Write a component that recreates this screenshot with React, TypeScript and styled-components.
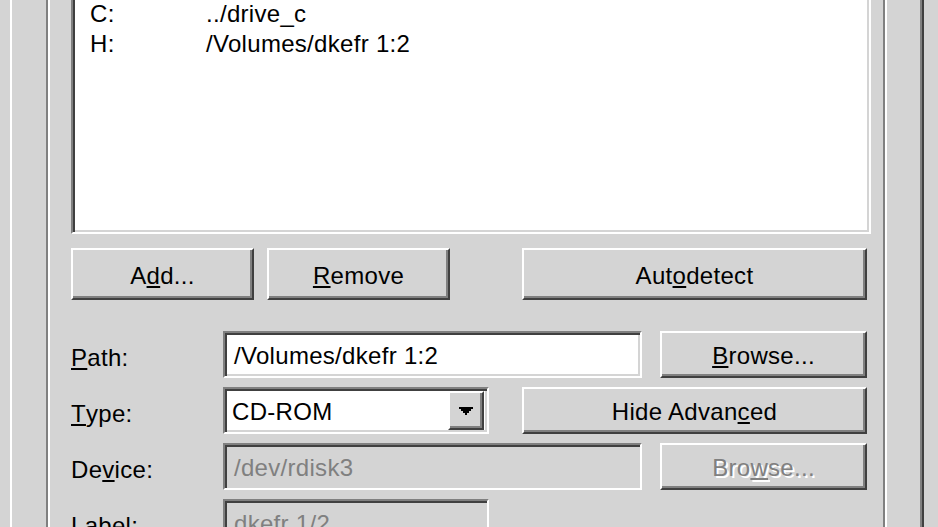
import React from "react";
import styled, { createGlobalStyle, css } from "styled-components";

const GlobalStyle = createGlobalStyle`
  html, body {
    margin: 0;
    padding: 0;
    background: #d4d4d4;
    overflow: hidden;
  }
  body {
    font-family: "Liberation Sans", Arial, sans-serif;
    font-size: 24px;
    letter-spacing: 0.3px;
    color: #000;
  }
  * { box-sizing: border-box; }
`;

const Frame = styled.div`
  width: 938px;
  height: 527px;
  overflow: hidden;
  padding-left: 10px;
  background: #d4d4d4;
`;

const TabPage = styled.div`
  width: 914px;
  margin-top: -80px;
  border-left: 2px solid #fff;
  border-top: 2px solid #fff;
  border-right: 2px solid #404040;
  box-shadow: inset -2px 0 0 #808080;
  padding: 18px 0 120px 34px;
`;

const GroupBox = styled.div`
  width: 839px;
  border: 2px solid #808080;
  box-shadow: 2px 2px 0 #fff, inset 2px 2px 0 #fff;
  padding: 38px 12px 80px 23px;
`;

const sunken = css`
  border: 2px solid;
  border-color: #808080 #fff #fff #808080;
  box-shadow: inset 2px 2px 0 #404040, inset -2px -2px 0 #d4d4d4;
`;

const raised = css`
  border: 2px solid;
  border-color: #fff #404040 #404040 #fff;
  box-shadow: inset -2px -2px 0 #808080;
`;

const ListBox = styled.div`
  ${sunken};
  height: 254px;
  background: #fff;
  padding: 20px 0 0 17px;
`;

const ListRow = styled.div`
  display: grid;
  grid-template-columns: 116px 1fr;
  height: 30px;
  line-height: 24px;
  white-space: pre;
`;

const ButtonRow = styled.div`
  margin-top: 14px;
  display: flex;
  height: 52px;
`;

const Button = styled.div<{ $disabled?: boolean; $width?: number; $gap?: number }>`
  ${raised};
  background: #d4d4d4;
  display: flex;
  align-items: center;
  justify-content: center;
  padding-top: 3px;
  white-space: pre;
  ${(p) => (p.$width ? `width: ${p.$width}px;` : "")}
  margin-left: ${(p) => p.$gap ?? 0}px;
  color: ${(p) => (p.$disabled ? "#808080" : "#000")};
  text-shadow: ${(p) => (p.$disabled ? "2px 2px 0 #fff" : "none")};
`;

const U = styled.span`
  text-decoration: underline;
  text-decoration-thickness: 2px;
  text-underline-offset: 2px;
`;

const FormGrid = styled.div`
  margin-top: 31px;
  display: grid;
  grid-template-columns: 152px 266px 33px 120px 18px 207px;
  grid-auto-rows: 47px;
  row-gap: 9px;
`;

const Label = styled.div`
  grid-column: 1;
  display: flex;
  align-items: center;
  padding-top: 7px;
  white-space: pre;
`;

const TextBox = styled.div<{ $disabled?: boolean; $span: string }>`
  ${sunken};
  grid-column: ${(p) => p.$span};
  background: ${(p) => (p.$disabled ? "#d4d4d4" : "#fff")};
  color: ${(p) => (p.$disabled ? "#808080" : "#000")};
  display: flex;
  align-items: center;
  padding: 3px 0 0 9px;
  white-space: pre;
  overflow: hidden;
`;

const Combo = styled.div`
  ${sunken};
  grid-column: 2;
  background: #fff;
  display: flex;
  align-items: stretch;
  padding: 2px 3px 2px 2px;
`;

const ComboText = styled.div`
  flex: 1;
  display: flex;
  align-items: center;
  padding: 3px 0 0 5px;
`;

const DropButton = styled.div`
  ${raised};
  width: 36px;
  background: #d4d4d4;
  display: flex;
  align-items: center;
  justify-content: center;
`;

const GridButton = styled(Button)<{ $span: string }>`
  grid-column: ${(p) => p.$span};
`;

const Arrow = () => (
  <svg width="14" height="8" viewBox="0 0 14 8">
    <path d="M0 0H14V2H12V4H10V6H8V8H6V6H4V4H2V2H0Z" fill="#000" />
  </svg>
);

export default function App() {
  return (
    <>
      <GlobalStyle />
      <Frame>
        <TabPage>
          <GroupBox>
            <ListBox>
              <ListRow>
                <span>C:</span>
                <span>../drive_c</span>
              </ListRow>
              <ListRow>
                <span>H:</span>
                <span>/Volumes/dkefr 1:2</span>
              </ListRow>
            </ListBox>
            <ButtonRow>
              <Button $width={183}>
                A<U>d</U>d...
              </Button>
              <Button $width={183} $gap={13}>
                <U>R</U>emove
              </Button>
              <Button $width={345} $gap={72}>
                Aut<U>o</U>detect
              </Button>
            </ButtonRow>
            <FormGrid>
              <Label>
                <U>P</U>ath:
              </Label>
              <TextBox $span="2 / 5">/Volumes/dkefr 1:2</TextBox>
              <GridButton $span="6">
                <U>B</U>rowse...
              </GridButton>

              <Label>
                <U>T</U>ype:
              </Label>
              <Combo>
                <ComboText>CD-ROM</ComboText>
                <DropButton>
                  <Arrow />
                </DropButton>
              </Combo>
              <GridButton $span="4 / 7">
                Hide Advan<U>c</U>ed
              </GridButton>

              <Label>
                De<U>v</U>ice:
              </Label>
              <TextBox $span="2 / 5" $disabled>
                /dev/rdisk3
              </TextBox>
              <GridButton $span="6" $disabled>
                Bro<U>w</U>se...
              </GridButton>

              <Label>
                La<U>b</U>el:
              </Label>
              <TextBox $span="2" $disabled>
                dkefr 1/2
              </TextBox>
            </FormGrid>
          </GroupBox>
        </TabPage>
      </Frame>
    </>
  );
}
